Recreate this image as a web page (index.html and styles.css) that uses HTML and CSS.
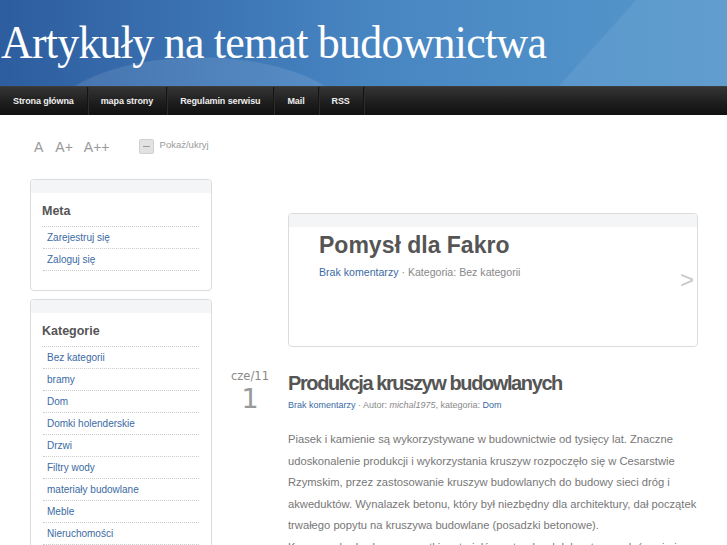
FILE: index.html
```html
<!DOCTYPE html>
<html lang="pl">
<head>
<meta charset="utf-8">
<title>Artykuły na temat budownictwa</title>
<link rel="stylesheet" href="styles.css">
</head>
<body>
<header class="header">
  <h1 class="site-title">Artykuły na temat budownictwa</h1>
</header>
<nav class="nav">
  <a class="nav-item" href="#">Strona główna</a>
  <a class="nav-item" href="#">mapa strony</a>
  <a class="nav-item" href="#">Regulamin serwisu</a>
  <a class="nav-item" href="#">Mail</a>
  <a class="nav-item" href="#">RSS</a>
</nav>
<div class="page">
  <div class="toolbar">
    <span class="fs fs-1">A</span>
    <span class="fs fs-2">A+</span>
    <span class="fs fs-3">A++</span>
    <span class="toggle"><span class="toggle-btn"><span class="dash"></span></span><span class="toggle-label">Pokaż/ukryj</span></span>
  </div>
  <div class="columns">
    <aside class="sidebar">
      <section class="box">
        <div class="box-band"></div>
        <h3 class="box-title">Meta</h3>
        <ul class="box-list">
          <li><a href="#">Zarejestruj się</a></li>
          <li><a href="#">Zaloguj się</a></li>
        </ul>
      </section>
      <section class="box">
        <div class="box-band"></div>
        <h3 class="box-title">Kategorie</h3>
        <ul class="box-list">
          <li><a href="#">Bez kategorii</a></li>
          <li><a href="#">bramy</a></li>
          <li><a href="#">Dom</a></li>
          <li><a href="#">Domki holenderskie</a></li>
          <li><a href="#">Drzwi</a></li>
          <li><a href="#">Filtry wody</a></li>
          <li><a href="#">materiały budowlane</a></li>
          <li><a href="#">Meble</a></li>
          <li><a href="#">Nieruchomości</a></li>
          <li><a href="#">Ogrody</a></li>
        </ul>
      </section>
    </aside>
    <main class="main">
      <section class="featured">
        <div class="box-band"></div>
        <div class="featured-body">
          <h2 class="featured-title">Pomysł dla Fakro</h2>
          <p class="featured-meta"><a href="#">Brak komentarzy</a> · Kategoria: Bez kategorii</p>
        </div>
        <span class="next">&gt;</span>
      </section>
      <article class="post">
        <div class="date">
          <span class="date-month">cze/11</span>
          <span class="date-day">1</span>
        </div>
        <div class="post-content">
          <h2 class="post-title">Produkcja kruszyw budowlanych</h2>
          <p class="post-meta"><a href="#">Brak komentarzy</a> · Autor: <em>michal1975</em>, kategoria: <a href="#">Dom</a></p>
          <div class="post-text">
            <p>Piasek i kamienie są wykorzystywane w budownictwie od tysięcy lat. Znaczne udoskonalenie produkcji i wykorzystania kruszyw rozpoczęło się w Cesarstwie Rzymskim, przez zastosowanie kruszyw budowlanych do budowy sieci dróg i akweduktów. Wynalazek betonu, który był niezbędny dla architektury, dał początek trwałego popytu na kruszywa budowlane (posadzki betonowe).</p>
            <p>Kruszywa budowlane – cząstki materiałów naturalnych lub sztucznych (np. żwir, piasek) stosowane w budownictwie.</p>
          </div>
        </div>
      </article>
    </main>
  </div>
</div>
</body>
</html>
```

FILE: styles.css
```css
* { box-sizing: border-box; }
html, body { margin: 0; padding: 0; }
body {
  background: #fff;
  font-family: "Liberation Sans", Arial, sans-serif;
  color: #777;
  height: 545px;
  overflow: hidden;
}
a { color: #3b6aa3; text-decoration: none; }

.header {
  height: 86px;
  background:
    linear-gradient(132deg, rgba(255,255,255,0) 0%, rgba(255,255,255,0) 79%, rgba(255,255,255,0.07) 79.2%, rgba(255,255,255,0.07) 100%),
    radial-gradient(ellipse 260px 120px at 200px 130px, rgba(255,255,255,0.10) 0%, rgba(255,255,255,0.10) 60%, rgba(255,255,255,0) 61%),
    linear-gradient(90deg, #2d5d9e 0%, #3a71b1 25%, #4785c1 50%, #4f8fc7 75%, #5597cb 100%);
  overflow: hidden;
}
.site-title {
  margin: 0;
  padding: 14px 0 0 1px;
  font-family: "Liberation Serif", "Times New Roman", serif;
  font-weight: normal;
  font-size: 47px;
  line-height: 56px;
  color: #fff;
  letter-spacing: -0.8px;
  white-space: nowrap;
  transform: scaleX(0.934);
  transform-origin: 0 0;
}

.nav {
  height: 29px;
  display: flex;
  background: linear-gradient(#353535, #1c1c1c 60%, #111);
  border-top: 1px solid #3d3d3d;
}
.nav-item {
  padding: 0 13px;
  line-height: 28px;
  font-size: 9px;
  font-weight: bold;
  letter-spacing: -0.1px;
  color: #eee;
  border-right: 1px solid #141414;
  box-shadow: 1px 0 0 #2c2c2c;
}

.page { padding-left: 30px; }

.toolbar {
  height: 64px;
  display: flex;
  align-items: flex-start;
  padding-top: 24px;
}
.fs {
  font-size: 14px;
  line-height: 16px;
  color: #999;
}
.fs-1 { margin-left: 4px; }
.fs-2 { margin-left: 12px; }
.fs-3 { margin-left: 11px; }
.toggle { display: flex; align-items: flex-start; margin-left: 29px; }
.toggle-btn {
  width: 15px; height: 15px;
  background: #e2e2e2;
  border: 1px solid #d0d0d0;
  border-radius: 2px;
  display: flex; align-items: center; justify-content: center;
}
.dash { width: 7px; height: 1px; background: #9a9a9a; }
.toggle-label {
  margin-left: 6px;
  font-size: 9.5px;
  line-height: 12px;
  color: #999;
}

.columns { display: flex; align-items: flex-start; }

.sidebar {
  width: 182px;
  display: flex;
  flex-direction: column;
  gap: 8px;
}
.box {
  border: 1px solid #dcdcdc;
  border-radius: 4px;
  background: #fff;
  padding: 0 12px 19px;
  box-shadow: 0 0 1px rgba(0,0,0,0.04);
}
.box-band {
  height: 13px;
  margin: 0 -12px;
  background: #f4f5f7;
  border-radius: 3px 3px 0 0;
}
.box-title {
  margin: 0 0 0 -1px;
  padding-top: 10px;
  height: 34px;
  font-size: 12.5px;
  line-height: 16px;
  color: #555;
  font-weight: bold;
  border-bottom: 1px dotted #ccc;
}
.box-list { list-style: none; margin: 0; padding: 0; }
.box-list li {
  height: 22px;
  line-height: 21px;
  border-bottom: 1px dotted #ccc;
  padding-left: 4px;
  font-size: 10px;
}

.main {
  margin-left: 8px;
  width: 478px;
  padding-top: 34px;
}
.featured {
  position: relative;
  margin-left: 68px;
  width: 410px;
  height: 134px;
  border: 1px solid #dcdcdc;
  border-radius: 4px;
}
.featured .box-band { margin: 0; }
.featured-body { padding: 3px 0 0 30px; }
.featured-title {
  margin: 0;
  font-size: 23px;
  line-height: 30px;
  color: #555;
  font-weight: bold;
}
.featured-meta {
  margin: 5px 0 0;
  font-size: 10.6px;
  line-height: 14px;
  color: #888;
}
.next {
  position: absolute;
  right: 3px;
  top: 52px;
  font-size: 24px;
  line-height: 28px;
  color: #c8c8c8;
}

.post { display: flex; margin-top: 23px; }
.date {
  width: 68px;
  display: flex;
  flex-direction: column;
  padding-left: 11px;
  margin-top: -2px;
  font-family: "DejaVu Sans", sans-serif;
  color: #888;
}
.date-month { font-size: 11.5px; line-height: 16px; width: 38px; text-align: center; }
.date-day { font-size: 27px; line-height: 30px; color: #999; width: 38px; text-align: center; }
.post-content { width: 410px; }
.post-title {
  margin: 0;
  font-size: 20px;
  line-height: 26px;
  letter-spacing: -1.4px;
  color: #555;
  font-weight: bold;
}
.post-meta {
  margin: 2px 0 0;
  font-size: 9px;
  line-height: 14px;
  color: #888;
}
.post-text { margin-top: 17px; }
.post-text p {
  margin: 0;
  font-size: 11.2px;
  line-height: 21.5px;
  color: #777;
}
```
